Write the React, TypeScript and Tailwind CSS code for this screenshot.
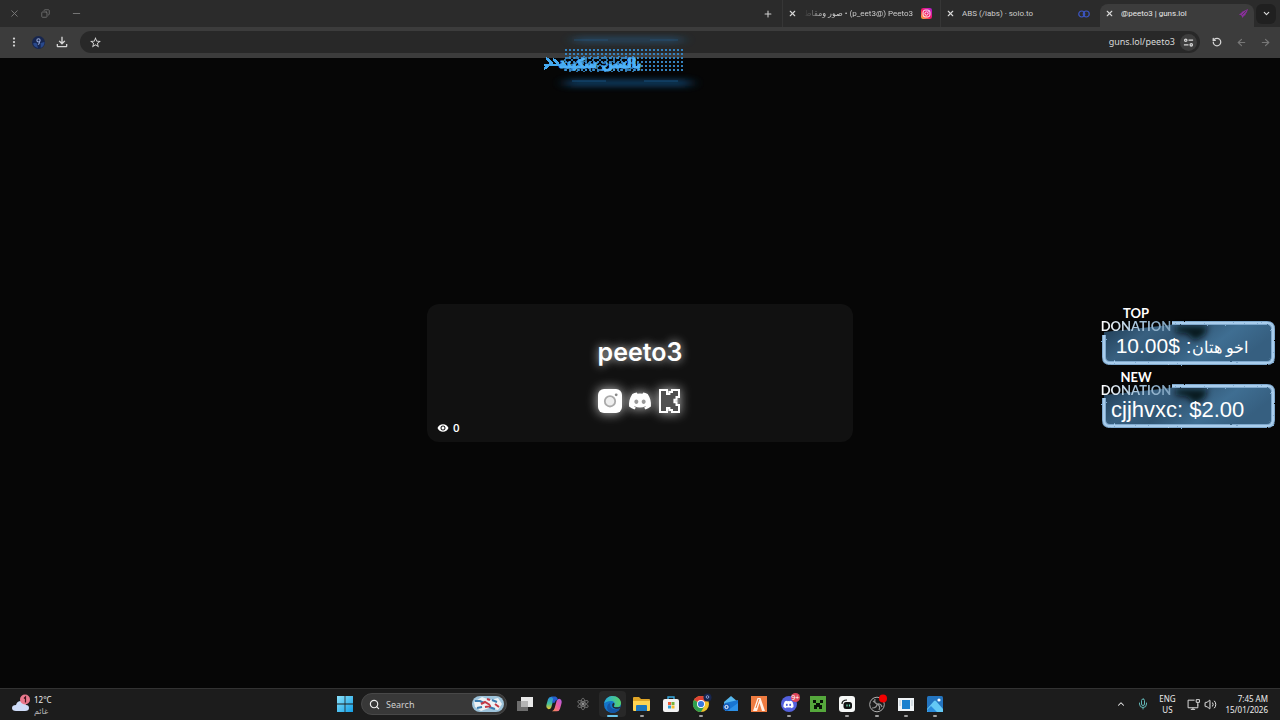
import React, { useState } from 'react';
import { ChevronDown, ChevronUp, Copy, Mic, Minus, MoreVertical, Plus, RotateCcw, Search, Volume2, X, ArrowLeft, ArrowRight } from 'lucide-react';
import { FaDiscord } from 'react-icons/fa';
import { MdOutlineFileDownload, MdStarBorder, MdRemoveRedEye } from 'react-icons/md';

interface TabProps {
  title: string;
  icon: React.ReactNode;
  active?: boolean;
  rtl?: boolean;
}

interface DonationProps {
  kind: string;
  name: string;
  amount: string;
  rtl?: boolean;
}

interface TaskApp {
  name: string;
  icon: React.ReactNode;
  running?: boolean;
  active?: boolean;
}

/* ---------- tab favicons ---------- */

const InstagramColor = () => (
  <svg viewBox="0 0 24 24" className="size-[11px]">
    <defs>
      <linearGradient id="ig" x1="0" y1="1" x2="1" y2="0">
        <stop offset="0" stopColor="#ffc23a" />
        <stop offset="0.45" stopColor="#f6195f" />
        <stop offset="1" stopColor="#b01be0" />
      </linearGradient>
    </defs>
    <rect width="24" height="24" rx="5" fill="url(#ig)" />
    <rect x="4.5" y="4.5" width="15" height="15" rx="4.5" fill="none" stroke="#fff" strokeWidth="2" />
    <circle cx="12" cy="12" r="3.6" fill="none" stroke="#fff" strokeWidth="2" />
    <circle cx="16.4" cy="7.6" r="1" fill="#fff" />
  </svg>
);

const SoloIcon = () => (
  <svg viewBox="0 0 24 16" className="h-2 w-3" fill="none" stroke="#3c56c4" strokeWidth="2.4">
    <circle cx="7.5" cy="8" r="6" />
    <circle cx="16.5" cy="8" r="6" />
  </svg>
);

const GunsIcon = () => (
  <svg viewBox="0 0 24 24" className="size-[11px]" fill="#8a2f9c">
    <path d="M22 2 9 8 7 11l-5 3 5 2 3 6 3-5 3-1 1-4 2-2Z" />
    <path d="M18 6 9 15" stroke="#3c3c3c" strokeWidth="1.6" />
  </svg>
);

const Tab: React.FC<TabProps> = ({ title, icon, active = false, rtl = false }) => (
  <div className={`flex h-full w-[158px] items-center pt-1 ${active ? 'px-0.5' : 'border-l border-[#363636] pr-[3px]'}`}>
    <div className={`flex h-full w-full items-center gap-[7px] rounded-t-lg px-[5px] ${active ? 'bg-[#3c3c3c]' : ''}`}>
      <button aria-label={`Close ${title}`} className="-mt-1 shrink-0 text-[#d8d8d8]">
        <X className="size-[9px]" strokeWidth={3} />
      </button>
      <a
        href="#"
        dir={rtl ? 'rtl' : 'ltr'}
        className={`-mt-1 min-w-0 flex-1 overflow-hidden font-['Roboto','DejaVu_Sans',sans-serif] text-[8px] leading-3 whitespace-nowrap ${active ? 'text-[#e8e8e8]' : 'text-[#cccccc]'} ${rtl ? '[mask-image:linear-gradient(to_right,transparent,black_20px)]' : ''}`}
      >
        {title}
      </a>
      <span className="-mt-1 flex w-3 shrink-0 justify-center">{icon}</span>
    </div>
  </div>
);

const TabStrip = () => (
  <div className="flex h-[27px] items-center justify-between bg-[#2b2b2b] pr-1">
    <div className="flex items-center gap-[19px] pl-2 text-[#7c7c7c]">
      <button aria-label="Close window"><X className="mx-px size-[11px]" strokeWidth={2} /></button>
      <button aria-label="Restore window"><Copy className="mx-px size-[9px] -scale-x-100" strokeWidth={2} /></button>
      <button aria-label="Minimize window"><Minus className="mx-px size-[11px]" strokeWidth={2} /></button>
    </div>
    <div className="flex h-full items-center">
      <button aria-label="New tab" className="mr-[9px] text-[#d0d0d0]">
        <Plus className="size-[10px]" strokeWidth={2.5} />
      </button>
      {/* marks keep the handle in right-to-left order */}
      <Tab title={'Peeto3\u200f (@\u200fp_eet3\u200f) • صور ومقاط'} icon={<InstagramColor />} rtl />
      <Tab title="ABS (/iabs) · solo.to" icon={<SoloIcon />} />
      <Tab title="@peeto3 | guns.lol" icon={<GunsIcon />} active />
      <button aria-label="Search tabs" className="flex size-5 items-center justify-center rounded-md bg-[#202020] text-[#dedede]">
        <ChevronDown className="size-[9px]" strokeWidth={3} />
      </button>
    </div>
  </div>
);

const Toolbar = () => {
  const [url, setUrl] = useState('guns.lol/peeto3');

  return (
    <div className="flex h-[31px] items-center bg-[#3c3c3c] pr-[3px] pb-px pl-[2px] text-[#d6d6d6]">
      <button aria-label="Menu" className="flex w-6 justify-center"><MoreVertical className="size-3" strokeWidth={2.5} /></button>
      <button aria-label="Profile" className="flex w-6 justify-center">
        <svg viewBox="0 0 24 24" className="size-[13px]">
          <circle cx="12" cy="12" r="12" fill="#17264f" />
          <path d="M2 14q4-3 7 0l2 8q-7-1-9-8M16 13l7-2q0 8-7 11Z" fill="#29498c" />
          <circle cx="12" cy="8" r="3" fill="none" stroke="#92a4d2" strokeWidth="2" />
          <path d="M14 10q0 4-3 6" fill="none" stroke="#92a4d2" strokeWidth="2" />
        </svg>
      </button>
      <button aria-label="Downloads" className="flex w-6 justify-center"><MdOutlineFileDownload className="size-[16px]" /></button>
      <div className="ml-1.5 flex h-[22px] flex-1 items-center rounded-full bg-[#282828] pr-[3px] pl-[9px]">
        <button aria-label="Bookmark"><MdStarBorder className="size-[13px]" /></button>
        <input
          aria-label="Address"
          value={url}
          onChange={(e) => setUrl(e.target.value)}
          className="min-w-0 flex-1 bg-transparent px-[5px] text-right text-[9px] leading-4 text-[#d8d8d8] outline-none"
        />
        <button aria-label="Site settings" className="flex size-[17px] items-center justify-center rounded-full bg-[#3d3d3d]">
          <svg viewBox="0 0 24 24" className="size-[11px]" fill="none" stroke="#d8d8d8" strokeWidth="2.8">
            <path d="M12 7h10M2 17h10" />
            <circle cx="6" cy="7" r="2.6" />
            <circle cx="18" cy="17" r="2.6" />
          </svg>
        </button>
      </div>
      <button aria-label="Reload" className="ml-[5px] flex w-6 justify-center"><RotateCcw className="size-[10px]" strokeWidth={3} /></button>
      <button aria-label="Back" className="flex w-6 justify-center text-[#777]"><ArrowLeft className="size-[11px]" strokeWidth={2.5} /></button>
      <button aria-label="Forward" className="flex w-6 justify-center text-[#777]"><ArrowRight className="size-[11px]" strokeWidth={2.5} /></button>
    </div>
  );
};

/* ---------- stream overlays ---------- */

const PixelBanner = () => (
  <div className="pointer-events-none absolute top-8 left-1/2 -translate-x-1/2">
    <svg viewBox="-24 0 208 64" className="h-16 w-52">
      <defs>
        <pattern id="dots" width="4" height="4" patternUnits="userSpaceOnUse">
          <rect x="1" y="1" width="2" height="2" fill="#3583bf" />
        </pattern>
        <pattern id="dashes" width="7" height="5" patternUnits="userSpaceOnUse">
          <path d="M0 1h3M4 3h2M2 5h2" stroke="#3b97dc" strokeWidth="1.5" />
        </pattern>
        <filter id="glow" x="-20%" y="-600%" width="140%" height="1300%">
          <feGaussianBlur stdDeviation="7 3" />
        </filter>
      </defs>
      <rect x="14" y="6" width="108" height="4" fill="#2272b0" opacity="0.6" filter="url(#glow)" />
      <rect x="6" y="48" width="124" height="6" fill="#155f9b" opacity="0.7" filter="url(#glow)" />
      <path d="M14 8h34M90 8h28" stroke="#255b87" opacity="0.6" />
      <path d="M12 49h34M84 49h34" stroke="#1c6ba6" opacity="0.6" />
      <rect x="4" y="17" width="120" height="24" fill="url(#dots)" />
      <rect x="4" y="24" width="74" height="16" fill="url(#dashes)" />
      <text x="40" y="36" textAnchor="middle" direction="rtl" fill="#4db1f8" stroke="#4db1f8" strokeWidth="1" className="font-['DejaVu_Sans',sans-serif] text-[13px] font-bold">بالسن سكينة</text>
      <path d="M-16 33H6M-14 26l6 5-8 6M-7 27l6 5" fill="none" stroke="#45a9f0" strokeWidth="2.5" shapeRendering="crispEdges" />
    </svg>
  </div>
);

const Donation: React.FC<DonationProps> = ({ kind, name, amount, rtl = false }) => (
  <div className="relative w-[176px] pb-1.5">
    <svg viewBox="0 0 176 57" className="absolute inset-0 h-full w-full overflow-visible">
      <defs>
        <filter id={`rough-${kind}`} x="-5%" y="-10%" width="110%" height="120%">
          <feTurbulence type="fractalNoise" baseFrequency="0.3" numOctaves="2" />
          <feDisplacementMap in="SourceGraphic" scale="2" xChannelSelector="R" yChannelSelector="G" />
          <feGaussianBlur stdDeviation="0.5" />
        </filter>
        <linearGradient id={`fill-${kind}`} x1="0" x2="1" y1="0" y2="0.3">
          <stop offset="0" stopColor="#1e3a52" />
          <stop offset="0.3" stopColor="#386080" />
          <stop offset="0.5" stopColor="#315674" />
          <stop offset="0.75" stopColor="#3f6e92" />
          <stop offset="1" stopColor="#365f80" />
        </linearGradient>
        <filter id={`smoke-${kind}`} x="-40%" y="-60%" width="180%" height="220%">
          <feGaussianBlur stdDeviation="3" />
        </filter>
      </defs>
      <path d="M4 26V24L70 17 76 15H168q5 0 5 5v30q0 5-5 5H9q-5 0-5-5Z" fill={`url(#fill-${kind})`} />
      <path d="M76 18h32l-3 9-10 6-8-7-12-2Z" fill="#05090e" opacity="0.85" filter={`url(#smoke-${kind})`} />
      <g filter={`url(#rough-${kind})`} fill="none" strokeLinejoin="round">
        <path d="M4 27v22q0 6 6 6H167q6 0 6-6V21q0-6-6-6H72" stroke="#7fa9ce" strokeWidth="4" />
        <path d="M4 27v22q0 6 6 6H167q6 0 6-6V21q0-6-6-6H72" stroke="#a9cdec" strokeWidth="2" />
      </g>
    </svg>
    <div className="relative w-[72px] text-center font-['Lato',sans-serif] text-[13px] leading-[13px] font-bold text-white">
      <div>{kind}</div>
      <div className="flex justify-center">
        <span className="bg-linear-to-r from-white via-[#a8c5dc] to-[#7fa3bf] bg-clip-text text-transparent">DONATION</span>
      </div>
    </div>
    <p dir={rtl ? 'rtl' : 'ltr'} className={`relative leading-[25px] whitespace-nowrap text-white ${rtl ? 'pr-7 text-[21px]' : 'pl-[11px] text-[22px]'}`}>
      <span className={rtl ? 'text-[16px]' : ''}>{name}</span>: {amount}
    </p>
  </div>
);

/* ---------- profile card ---------- */

const ProfileCard = () => (
  <section className="w-full max-w-[426px] rounded-xl bg-[#111] px-2.5 pt-8 pb-1.5 text-white">
    <h1 className="text-center font-['Inter',sans-serif] text-[25px] leading-8 font-semibold [text-shadow:0_0_10px_rgba(255,255,255,0.8)]">peeto3</h1>
    <div className="mt-[21px] flex justify-center gap-1.5">
      <a href="#" aria-label="Instagram" className="drop-shadow-[0_0_6px_rgba(255,255,255,0.8)]">
        <svg viewBox="0 0 24 24" className="size-6">
          <rect width="24" height="24" rx="6" fill="#fff" />
          <circle cx="12" cy="12.3" r="5.2" fill="#eee" stroke="#aaa" strokeWidth="1.8" />
          <circle cx="18.2" cy="5.8" r="1.4" fill="#888" />
        </svg>
      </a>
      <a href="#" aria-label="Discord" className="drop-shadow-[0_0_6px_rgba(255,255,255,0.8)]">
        <span className="relative block">
          <svg viewBox="0 0 24 24" className="absolute inset-0 size-6"><path d="M6 8h12v8H6z" fill="#999" /></svg>
          <FaDiscord className="relative size-6" />
        </span>
      </a>
      <a href="#" aria-label="Kick" className="drop-shadow-[0_0_6px_rgba(255,255,255,0.8)]">
        <svg viewBox="0 0 24 24" className="size-6">
          <path d="M2 1h7v4h2.400V3H14V1h7v7h-2.500v2.700h-2.100v2.600h2.100V16H21v7h-7v-2h-2.600v-2H9v4H2Z" fill="#505050" stroke="#fff" strokeWidth="2" />
        </svg>
      </a>
    </div>
    <div className="mt-[7px] flex h-4 items-center gap-1 font-['Inter',sans-serif] text-[10px] font-semibold">
      <MdRemoveRedEye className="size-3" />
      <span>0</span>
    </div>
  </section>
);

/* ---------- taskbar ---------- */

const apps: TaskApp[] = [
  {
    name: 'Task view',
    icon: (
      <svg viewBox="0 0 16 16" className="size-4">
        <rect y="5" width="11" height="10" fill="#6d6d6d" />
        <rect x="4" y="1" width="12" height="10" fill="#e8e8e8" />
        <rect x="4" y="5" width="7" height="6" fill="#b5b5b5" />
      </svg>
    ),
  },
  {
    name: 'Copilot',
    icon: (
      <svg viewBox="0 0 24 24" className="size-4">
        <defs>
          <linearGradient id="cpA" x1="0" y1="0" x2="0" y2="1"><stop stopColor="#2787e6" /><stop offset="0.55" stopColor="#44c19a" /><stop offset="1" stopColor="#f5c928" /></linearGradient>
          <linearGradient id="cpB" x1="1" y1="0" x2="0" y2="1"><stop stopColor="#b259ed" /><stop offset="0.5" stopColor="#ed609d" /><stop offset="1" stopColor="#fa924d" /></linearGradient>
        </defs>
        <path d="M8 1h7q-3 1-4 5L8 17q-1 3-4 3-5-1-3-8l2-7q1-4 5-4Z" fill="url(#cpA)" />
        <path d="M16 23H9q3-1 4-5l3-11q1-3 4-3 5 1 3 8l-2 7q-1 4-5 4Z" fill="url(#cpB)" />
        <path d="M8 1h6q3 0 4 5-4-1-5 4H9l2-6Z" fill="#245ccf" />
      </svg>
    ),
  },
  {
    name: 'Atom',
    icon: (
      <svg viewBox="0 0 24 24" className="size-3.5" fill="none" stroke="#858585" strokeWidth="1.2">
        <ellipse cx="12" cy="12" rx="3.6" ry="10" />
        <ellipse cx="12" cy="12" rx="3.6" ry="10" transform="rotate(60 12 12)" />
        <ellipse cx="12" cy="12" rx="3.6" ry="10" transform="rotate(120 12 12)" />
        <circle cx="12" cy="12" r="2" fill="#aaa" />
      </svg>
    ),
  },
  {
    name: 'Edge',
    active: true,
    icon: (
      <svg viewBox="0 0 24 24" className="size-[17px]">
        <defs>
          <linearGradient id="edA" x1="0" x2="1"><stop stopColor="#25a7df" /><stop offset="1" stopColor="#58d568" /></linearGradient>
        </defs>
        <circle cx="12" cy="12" r="12" fill="#1474c9" />
        <path d="M0 11C2 3 7 0 12 0c7 0 12 5 12 10 0 4-3 6-6 6-4 0-5-1-3-3 1-4-2-6-5-6-5 0-9 2-10 4Z" fill="url(#edA)" />
        <path d="M9 10c-2 6 4 11 13 8-4 7-12 7-15 4-5-5-2-11 2-12Z" fill="#1556a5" />
        <path d="M14 13c1-1 1-2 0-3-2 0-3 2-2 5 2 3 7 4 11 2l1-2q-2 1-6 1c-4 0-5-1-4-3Z" fill="#242424" />
      </svg>
    ),
  },
  {
    name: 'File Explorer',
    running: true,
    icon: (
      <svg viewBox="0 0 17 16" className="h-4 w-[17px]">
        <path d="M0 2q0-1 1-1h5l2 2h8q1 0 1 1v10H0Z" fill="#e0a526" />
        <path d="M0 5h17v9q0 1-1 1H1q-1 0-1-1Z" fill="#ffd352" />
        <path d="M3 10q0-1 1-1h9q1 0 1 1v5H3Z" fill="#1d76bd" />
      </svg>
    ),
  },
  {
    name: 'Store',
    icon: (
      <svg viewBox="0 0 16 16" className="size-4">
        <path d="M5 4V1h6v3" fill="none" stroke="#39a9df" strokeWidth="1.4" />
        <rect y="3" width="16" height="13" rx="2" fill="#f2f2f2" />
        <path d="M5 6h3v3H5z" fill="#ee5a35" />
        <path d="M8.5 6h3v3h-3z" fill="#76b33b" />
        <path d="M5 9.5h3v3H5z" fill="#2a9fd8" />
        <path d="M8.5 9.5h3v3h-3z" fill="#f5bd2c" />
      </svg>
    ),
  },
  {
    name: 'Chrome',
    running: true,
    icon: (
      <svg viewBox="0 0 18 18" className="size-[18px] overflow-visible">
        <circle cx="9" cy="9" r="8" fill="#f0c22c" />
        <path d="M9 9 2 5a8 8 0 0 1 13.900 0Z" fill="#e04335" />
        <path d="M9 9 2 5a8 8 0 0 0 7 12l3.500-6Z" fill="#2f9e4f" />
        <circle cx="9" cy="9" r="4" fill="#fff" />
        <circle cx="9" cy="9" r="3.100" fill="#3978e0" />
        <circle cx="15.500" cy="2.500" r="4" fill="#17264f" />
        <circle cx="15.500" cy="2" r="1.300" fill="none" stroke="#8ea3d6" />
      </svg>
    ),
  },
  {
    name: 'Outlook',
    icon: (
      <svg viewBox="0 0 16 16" className="size-4">
        <path d="M2 6 9 0l7 6v9H3Z" fill="#57b8ef" />
        <path d="m3 7 13-3v10q0 1-1 1H4q-1 0-1-1Z" fill="#1875d1" />
        <path d="M5 15 16 7v7q0 1-1 1Z" fill="#2c91e8" />
        <circle cx="4.500" cy="11" r="3.600" fill="#1759b5" />
        <circle cx="4.500" cy="11" r="1.600" fill="none" stroke="#fff" />
      </svg>
    ),
  },
  {
    name: 'FiveM',
    icon: (
      <svg viewBox="0 0 16 16" className="size-4">
        <path d="M0 0h16v16H0z" fill="#ee7b40" />
        <path d="M6.500 2h3L14 15h-3L8.500 7 7 12l-1 3H2Z" fill="#fff1e7" />
        <path d="m8 3-3 9" stroke="#ee7b40" />
      </svg>
    ),
  },
  {
    name: 'Discord',
    running: true,
    icon: (
      <span className="relative flex size-4 items-center justify-center rounded-full bg-[#5360dc] text-white">
        <FaDiscord className="size-[11px]" />
        <span className="absolute -top-[3px] -right-[3px] flex h-[9px] w-[9px] items-center justify-center rounded-full bg-[#e0465b] text-[7px] leading-none">9+</span>
      </span>
    ),
  },
  {
    name: 'Minecraft',
    icon: (
      <svg viewBox="0 0 16 16" className="size-4" shapeRendering="crispEdges">
        <path d="M0 0h16v16H0z" fill="#55a83c" />
        <path d="M3 4h3v3H3zM10 4h3v3h-3zM6 7h4v4H6zM4 9h3v4H4zM9 9h3v4H9z" fill="#071306" />
      </svg>
    ),
  },
  {
    name: 'Streamlabs',
    running: true,
    icon: (
      <svg viewBox="0 0 16 16" className="size-4">
        <rect width="16" height="16" rx="3" fill="#f6f8f7" />
        <rect x="4.500" y="6" width="8.500" height="7" rx="2.500" fill="#111" />
        <path d="M3 8q0-4 5-4" fill="none" stroke="#111" strokeWidth="1.200" />
        <path d="M8 8.500v2M10.500 8.500v2" stroke="#72dfba" strokeWidth="1.200" />
      </svg>
    ),
  },
  {
    name: 'OBS Studio',
    running: true,
    icon: (
      <svg viewBox="0 0 18 18" className="size-[18px] overflow-visible">
        <circle cx="9" cy="9.500" r="7.300" fill="#1b1b1b" stroke="#b0b0b0" strokeWidth="1" />
        <path d="M7 4q-1 4 2 5 4-1 5 3M9 9q0 4-5 4M9 9q4 2 2 6M9 9 5 6" fill="none" stroke="#959595" strokeWidth="1.200" />
        <circle cx="15" cy="3.500" r="4" fill="#f20000" />
      </svg>
    ),
  },
  {
    name: 'Window',
    running: true,
    icon: (
      <svg viewBox="0 0 16 13" className="h-[13px] w-4">
        <path d="M0 0h16v13H0z" fill="#f0f4f7" />
        <path d="M4 2h8v9H4z" fill="#1b80ce" />
        <path d="M1 3h2M1 5h2M1 7h2M13 3h2M13 5h2M13 7h2" stroke="#b6c4cf" />
      </svg>
    ),
  },
  {
    name: 'Photos',
    running: true,
    icon: (
      <svg viewBox="0 0 16 16" className="size-4">
        <rect width="16" height="16" rx="1.500" fill="#2374bf" />
        <path d="M0 13 7 5q1-1 2 0l7 8v3H0Z" fill="#64c9f5" />
        <path d="m0 14 4-4 6 6H1q-1 0-1-2Z" fill="#2a8bdb" />
        <circle cx="12" cy="4" r="1.600" fill="#fff" />
      </svg>
    ),
  },
];

const Taskbar = () => (
  <footer className="flex h-8 items-center border-t border-[#323232] bg-[#1c1c1c] text-[8px] leading-[11px] text-[#ededed]">
    <div className="flex flex-1 items-center gap-1 pl-3">
      <svg viewBox="0 0 18 18" className="mb-1 size-[18px] shrink-0">
        <path d="M4 17q-4 0-4-3t4-3q1-4 5-4 4 0 5 4 3 0 3 3t-4 3Z" fill="#cfdcf8" />
        <circle cx="13" cy="5.500" r="5" fill="#e9788c" />
        <path d="m12 4.500 1.500-1.500v5.500" fill="none" stroke="#40141d" strokeWidth="1.200" />
      </svg>
      <div>
        <div>12°C</div>
        <div className="text-[#b5b5b5]">غائم</div>
      </div>
    </div>

    <div className="flex h-full items-center pb-px">
      <button aria-label="Start" className="flex w-[29px] justify-center">
        <svg viewBox="0 0 16 16" className="size-4">
          <defs>
            <linearGradient id="win" x1="0" y1="0" x2="1" y2="1"><stop stopColor="#8ae2fb" /><stop offset="1" stopColor="#139fe6" /></linearGradient>
          </defs>
          <path d="M0 0h7.600v7.600H0zM8.400 0H16v7.600H8.400zM0 8.400h7.600V16H0zM8.400 8.400H16V16H8.400z" fill="url(#win)" />
        </svg>
      </button>
      <label className="ml-0.5 flex h-[22px] w-[146px] items-center rounded-full border border-[#484848] bg-[#383838] pr-0.5 pl-[7px]">
        <Search className="size-[11px] shrink-0" strokeWidth={2.5} />
        <input type="text" aria-label="Search" placeholder="Search" className="min-w-0 flex-1 bg-transparent pl-1.5 text-[9px] outline-none placeholder:text-[#cfcfcf]" />
        <svg viewBox="0 0 32 16" className="h-4 w-8 shrink-0">
          <rect width="32" height="16" rx="8" fill="#9dc3da" />
          <path d="M2 6 10 1l8 3 8-2 4 6-4 6-9-2-8 3-6-4Z" fill="#eef2f5" />
          <path d="M3 5h5l4 2M20 4l5 2M5 12l5-1M17 11l6 2" fill="none" stroke="#3b7db0" strokeWidth="2" />
          <path d="m9 8 4-2 5 3M13 11l6-1M23 8l4 3M15 3l3 1" fill="none" stroke="#c43a46" strokeWidth="2" />
        </svg>
      </label>
      <nav className="ml-[3px] grid h-full w-[440px] grid-cols-15">
        {apps.map((app) => (
          <button key={app.name} aria-label={app.name} className="relative flex items-center justify-center">
            {app.active && <span className="absolute inset-x-px inset-y-0.5 rounded bg-[#282828]" />}
            <span className="relative">{app.icon}</span>
            {app.active && <span className="absolute bottom-0.5 h-0.5 w-[11px] rounded-full bg-[#69c6ef]" />}
            {app.running && <span className="absolute bottom-0.5 h-0.5 w-1 rounded-full bg-[#a0a0a0]" />}
          </button>
        ))}
      </nav>
    </div>

    <div className="flex flex-1 items-center justify-end pr-3 pb-px">
      <button aria-label="Hidden icons" className="mr-[11px]"><ChevronUp className="size-[10px]" strokeWidth={2.5} /></button>
      <button aria-label="Microphone" className="mr-2 text-[#62b5b5]"><Mic className="size-[12px]" strokeWidth={2} /></button>
      <button className="mr-2.5 w-5 text-center">ENG<br />US</button>
      <button aria-label="Network" className="mr-1">
        <svg viewBox="0 0 24 24" className="size-[13px]" fill="none" stroke="#ddd" strokeWidth="1.800">
          <path d="M14 4H2v14h18v-6M7 21h8M11 18v3" />
          <path d="M17 3h6v5h-6zM20 8v6" />
        </svg>
      </button>
      <button aria-label="Volume"><Volume2 className="size-[13px]" strokeWidth={1.8} /></button>
      <div className="ml-2 text-right">
        <div>7:45 AM</div>
        <div>15/01/2026</div>
      </div>
    </div>
  </footer>
);

const App: React.FC = () => {
  return (
    <div className="relative flex min-h-screen flex-col bg-[#060606] font-['Noto_Sans','DejaVu_Sans',sans-serif]">
      <header>
        <TabStrip />
        <Toolbar />
      </header>
      <main className="flex flex-1 items-center justify-center font-['Liberation_Sans',Arial,sans-serif]">
        <ProfileCard />
        <aside className="absolute top-[307px] right-1 flex flex-col gap-[5px]">
          <Donation kind="TOP" name="اخو هتان" amount="$10.00" rtl />
          <Donation kind="NEW" name="cjjhvxc" amount="$2.00" />
        </aside>
      </main>
      <Taskbar />
      <PixelBanner />
    </div>
  );
};

export default App;
